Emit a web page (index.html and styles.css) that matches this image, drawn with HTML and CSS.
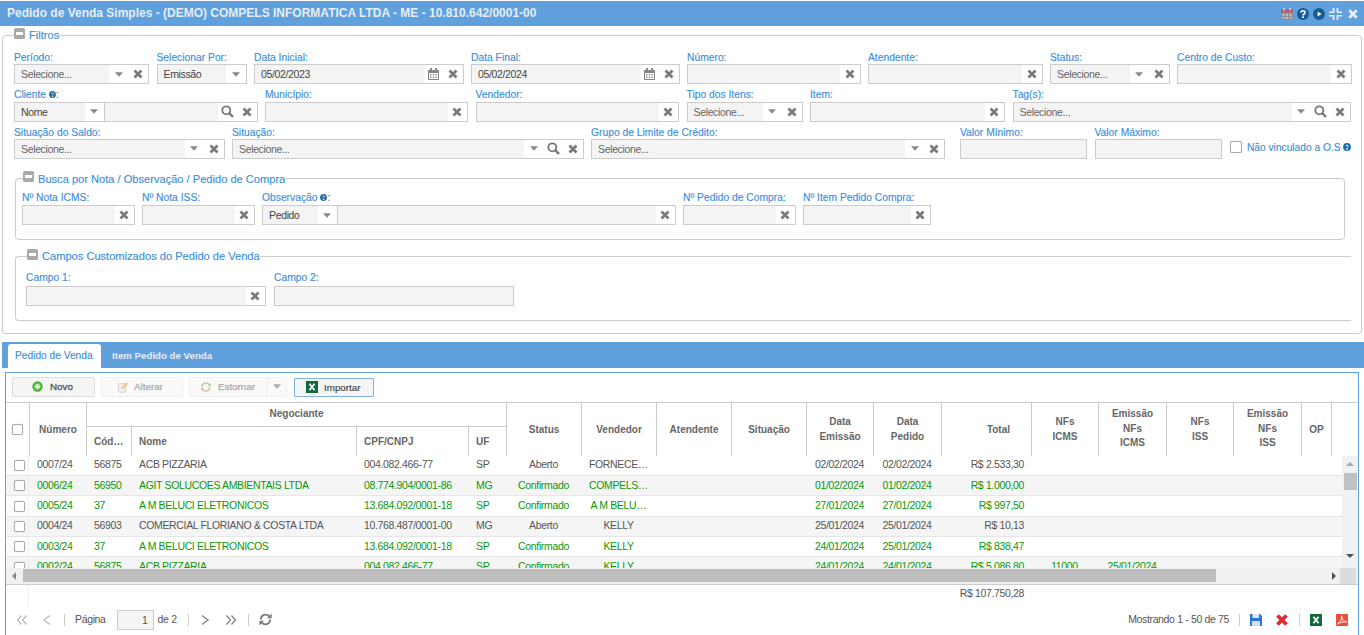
FILE: index.html
```html
<!DOCTYPE html>
<html lang="pt-BR">
<head>
<meta charset="utf-8">
<title>Pedido de Venda Simples</title>
<link rel="stylesheet" href="styles.css">
</head>
<body>
<svg class="defs" aria-hidden="true">
  <symbol id="x" viewBox="0 0 10 10"><path d="M1.5 1.5L8.5 8.5M8.5 1.5L1.5 8.5" fill="none" stroke="currentColor" stroke-width="2.8"/></symbol>
  <symbol id="caret" viewBox="0 0 8 5"><path d="M0 .3h8L4 4.8z" fill="currentColor"/></symbol>
  <symbol id="search" viewBox="0 0 13 13"><circle cx="5.3" cy="5.3" r="4" fill="none" stroke="currentColor" stroke-width="1.8"/><path d="M8.2 8.2L12 12" stroke="currentColor" stroke-width="2.4"/></symbol>
  <symbol id="cal" viewBox="0 0 11 12"><path d="M2 0h2v2h3V0h2v2h2v10H0V2h2zM1 5v6h9V5z" fill="currentColor"/><path d="M2 6h1.5v1.3H2zM4.7 6h1.5v1.3H4.7zM7.4 6h1.5v1.3H7.4zM2 8.4h1.5v1.3H2zM4.7 8.4h1.5v1.3H4.7zM7.4 8.4h1.5v1.3H7.4z" fill="currentColor"/></symbol>
  <symbol id="info" viewBox="0 0 8 8"><circle cx="4" cy="4" r="3.9" fill="#1f6aa5"/><path d="M2.9 3c0-1.4 2.3-1.4 2.3 0 0 .9-1.1.8-1.1 1.6M3.6 5.6h1v.8h-1z" fill="none" stroke="#fff" stroke-width=".8"/></symbol>
  <symbol id="minus" viewBox="0 0 11 11"><rect width="11" height="11" rx="1.5" fill="#a9a9a9"/><rect x="2" y="4" width="7" height="3" fill="#fff"/></symbol>
  <symbol id="xls" viewBox="0 0 12 12"><rect width="12" height="12" fill="#12693a"/><path d="M3.4 2.8L8.6 9.2M8.6 2.8L3.4 9.2" stroke="#fff" stroke-width="1.8"/></symbol>
</svg>

<header class="title">
  <h1>Pedido de Venda Simples - (DEMO) COMPELS INFORMATICA LTDA - ME - 10.810.642/0001-00</h1>
  <div class="title-icons">
    <svg class="ti" viewBox="0 0 12 12"><rect y="1" width="12" height="11" fill="#8d8d96"/><rect y="1" width="12" height="3.5" fill="#c0566a"/><path d="M3 0v2.5M9 0v2.5" stroke="#eee" stroke-width="1.2"/><path d="M1.5 6h2v1.5h-2zM5 6h2v1.5H5zM8.5 6h2v1.5h-2zM1.5 9h2v1.5h-2zM5 9h2v1.5H5zM8.5 9h2v1.5h-2z" fill="#d8d8d8"/></svg>
    <svg class="ti" viewBox="0 0 12 12"><circle cx="6" cy="6" r="6" fill="#145d96"/><path d="M3.9 4.6C4 2.2 8.2 2.2 8.1 4.6 8 6 6 6 6 7.4" fill="none" stroke="#fff" stroke-width="1.6"/><rect x="5.1" y="8.3" width="1.8" height="1.7" fill="#fff"/></svg>
    <svg class="ti" viewBox="0 0 12 12"><circle cx="6" cy="6" r="6" fill="#145d96"/><path d="M4.6 3.4L8.6 6l-4 2.6z" fill="#fff"/></svg>
    <svg class="ti ti-w" viewBox="0 0 13 12"><path d="M5.4 0v5H0V3.4h3.7V0zM7.6 0v5H13V3.4H9.3V0zM5.4 12V7H0v1.6h3.7V12zM7.6 12V7H13v1.6H9.3V12z" fill="#e8f0f8"/></svg>
    <svg class="ti ti-x" viewBox="0 0 10 10"><path d="M1.3 1.3L8.7 8.7M8.7 1.3L1.3 8.7" stroke="#e8f0f8" stroke-width="2.7"/></svg>
  </div>
</header>

<fieldset class="fs fs-main">
  <legend><svg class="minus"><use href="#minus"/></svg>Filtros</legend>
  <div class="frow r1">
    <div class="field"><label>Período:</label><div class="ctl"><span class="val mute">Selecione...</span><span class="b"><svg class="caret"><use href="#caret"/></svg></span><span class="b"><svg class="xi"><use href="#x"/></svg></span></div></div>
    <div class="field"><label>Selecionar Por:</label><div class="ctl"><span class="val">Emissão</span><span class="b"><svg class="caret"><use href="#caret"/></svg></span></div></div>
    <div class="field"><label>Data Inicial:</label><div class="ctl"><span class="val">05/02/2023</span><span class="b"><svg class="cal"><use href="#cal"/></svg></span><span class="b"><svg class="xi"><use href="#x"/></svg></span></div></div>
    <div class="field"><label>Data Final:</label><div class="ctl"><span class="val">05/02/2024</span><span class="b"><svg class="cal"><use href="#cal"/></svg></span><span class="b"><svg class="xi"><use href="#x"/></svg></span></div></div>
    <div class="field"><label>Número:</label><div class="ctl"><span class="val"></span><span class="b"><svg class="xi"><use href="#x"/></svg></span></div></div>
    <div class="field"><label>Atendente:</label><div class="ctl"><span class="val"></span><span class="b"><svg class="xi"><use href="#x"/></svg></span></div></div>
    <div class="field"><label>Status:</label><div class="ctl"><span class="val mute">Selecione...</span><span class="b"><svg class="caret"><use href="#caret"/></svg></span><span class="b"><svg class="xi"><use href="#x"/></svg></span></div></div>
    <div class="field"><label>Centro de Custo:</label><div class="ctl"><span class="val"></span><span class="b"><svg class="xi"><use href="#x"/></svg></span></div></div>
  </div>
  <div class="frow r2">
    <div class="field"><label>Cliente <svg class="info"><use href="#info"/></svg>:</label>
      <div class="pair pair-cli"><div class="ctl"><span class="val">Nome</span><span class="b"><svg class="caret"><use href="#caret"/></svg></span></div><div class="ctl"><span class="val"></span><span class="b"><svg class="se"><use href="#search"/></svg></span><span class="b"><svg class="xi"><use href="#x"/></svg></span></div></div></div>
    <div class="field"><label>Município:</label><div class="ctl"><span class="val"></span><span class="b"><svg class="xi"><use href="#x"/></svg></span></div></div>
    <div class="field"><label>Vendedor:</label><div class="ctl"><span class="val"></span><span class="b"><svg class="xi"><use href="#x"/></svg></span></div></div>
    <div class="field"><label>Tipo dos Itens:</label><div class="ctl"><span class="val mute">Selecione...</span><span class="b"><svg class="caret"><use href="#caret"/></svg></span><span class="b"><svg class="xi"><use href="#x"/></svg></span></div></div>
    <div class="field"><label>Item:</label><div class="ctl"><span class="val"></span><span class="b"><svg class="xi"><use href="#x"/></svg></span></div></div>
    <div class="field"><label>Tag(s):</label><div class="ctl"><span class="val mute">Selecione...</span><span class="b"><svg class="caret"><use href="#caret"/></svg></span><span class="b"><svg class="se"><use href="#search"/></svg></span><span class="b"><svg class="xi"><use href="#x"/></svg></span></div></div>
  </div>
  <div class="frow r3">
    <div class="field"><label>Situação do Saldo:</label><div class="ctl"><span class="val mute">Selecione...</span><span class="b"><svg class="caret"><use href="#caret"/></svg></span><span class="b"><svg class="xi"><use href="#x"/></svg></span></div></div>
    <div class="field"><label>Situação:</label><div class="ctl"><span class="val mute">Selecione...</span><span class="b"><svg class="caret"><use href="#caret"/></svg></span><span class="b"><svg class="se"><use href="#search"/></svg></span><span class="b"><svg class="xi"><use href="#x"/></svg></span></div></div>
    <div class="field"><label>Grupo de Limite de Crédito:</label><div class="ctl"><span class="val mute">Selecione...</span><span class="b"><svg class="caret"><use href="#caret"/></svg></span><span class="b"><svg class="xi"><use href="#x"/></svg></span></div></div>
    <div class="field"><label>Valor Mínimo:</label><div class="ctl"><span class="val"></span></div></div>
    <div class="field"><label>Valor Máximo:</label><div class="ctl"><span class="val"></span></div></div>
    <div class="chk"><span class="box box-lg"></span><span class="chk-t">Não vinculado a O.S</span><svg class="info"><use href="#info"/></svg></div>
  </div>

  <fieldset class="fs fs-busca">
    <legend><svg class="minus"><use href="#minus"/></svg>Busca por Nota / Observação / Pedido de Compra</legend>
    <div class="frow r4">
      <div class="field"><label>Nº Nota ICMS:</label><div class="ctl"><span class="val"></span><span class="b"><svg class="xi"><use href="#x"/></svg></span></div></div>
      <div class="field"><label>Nº Nota ISS:</label><div class="ctl"><span class="val"></span><span class="b"><svg class="xi"><use href="#x"/></svg></span></div></div>
      <div class="field"><label>Observação <svg class="info"><use href="#info"/></svg>:</label>
        <div class="pair pair-obs"><div class="ctl"><span class="val">Pedido</span><span class="b"><svg class="caret"><use href="#caret"/></svg></span></div><div class="ctl"><span class="val"></span><span class="b"><svg class="xi"><use href="#x"/></svg></span></div></div></div>
      <div class="field"><label>Nº Pedido de Compra:</label><div class="ctl"><span class="val"></span><span class="b"><svg class="xi"><use href="#x"/></svg></span></div></div>
      <div class="field"><label>Nº Item Pedido Compra:</label><div class="ctl"><span class="val"></span><span class="b"><svg class="xi"><use href="#x"/></svg></span></div></div>
    </div>
  </fieldset>

  <fieldset class="fs fs-campos">
    <legend><svg class="minus"><use href="#minus"/></svg>Campos Customizados do Pedido de Venda</legend>
    <div class="frow r5">
      <div class="field"><label>Campo 1:</label><div class="ctl"><span class="val"></span><span class="b"><svg class="xi"><use href="#x"/></svg></span></div></div>
      <div class="field"><label>Campo 2:</label><div class="ctl"><span class="val"></span></div></div>
    </div>
  </fieldset>
</fieldset>

<nav class="tabs">
  <a class="tab tab-on">Pedido de Venda</a>
  <a class="tab">Item Pedido de Venda</a>
</nav>

<section class="panel">
  <div class="toolbar">
    <button class="btn btn-novo"><svg class="bi" viewBox="0 0 12 12"><circle cx="6" cy="6" r="5.6" fill="#4cae32"/><circle cx="6" cy="6" r="3.6" fill="#7fd15f"/><path d="M6 3.2v5.6M3.2 6h5.6" stroke="#fff" stroke-width="1.7"/></svg>Novo</button>
    <button class="btn btn-off btn-alt"><svg class="bi" viewBox="0 0 12 12"><path d="M.8 2.5h7.5v9H.8z" fill="#f4f4f4" stroke="#ccc"/><path d="M3.5 8.5l.5-2.2L9.6.7l1.7 1.7L5.7 8z" fill="#efc983"/></svg>Alterar</button>
    <div class="split">
      <button class="btn btn-off btn-est"><svg class="bi" viewBox="0 0 14 12"><path d="M2.2 6.2A4.8 4.8 0 0 1 11 3.5" fill="none" stroke="#9ed593" stroke-width="1.4"/><path d="M12.6 1.2v3.6H9z" fill="#9ed593"/><path d="M11.8 5.8A4.8 4.8 0 0 1 3 8.5" fill="none" stroke="#f2aaa0" stroke-width="1.4"/><path d="M1.4 10.8V7.2H5z" fill="#f2aaa0"/></svg>Estornar</button>
      <button class="btn btn-off btn-car"><svg class="caret"><use href="#caret"/></svg></button>
    </div>
    <button class="btn btn-imp"><svg class="bi"><use href="#xls"/></svg>Importar</button>
  </div>

  <table class="grid ghead">
    <colgroup><col class="c1"><col class="c2"><col class="c3"><col class="c4"><col class="c5"><col class="c6"><col class="c7"><col class="c7"><col class="c7"><col class="c7"><col class="c8"><col class="c9"><col class="c10"><col class="c8"><col class="c9"><col class="c8"><col class="c9"><col class="c11"><col class="c12"></colgroup>
    <thead>
      <tr class="h1">
        <th rowspan="2" class="nb"><span class="box"></span></th>
        <th rowspan="2">Número</th>
        <th colspan="4" class="neg">Negociante</th>
        <th rowspan="2">Status</th>
        <th rowspan="2">Vendedor</th>
        <th rowspan="2">Atendente</th>
        <th rowspan="2">Situação</th>
        <th rowspan="2">Data<br>Emissão</th>
        <th rowspan="2">Data<br>Pedido</th>
        <th rowspan="2" class="tot">Total</th>
        <th rowspan="2">NFs<br>ICMS</th>
        <th rowspan="2" class="l3">Emissão<br>NFs<br>ICMS</th>
        <th rowspan="2">NFs<br>ISS</th>
        <th rowspan="2" class="l3">Emissão<br>NFs<br>ISS</th>
        <th rowspan="2">OP</th>
        <th rowspan="2"></th>
      </tr>
      <tr class="h2">
        <th class="lf">Cód…</th>
        <th class="lf">Nome</th>
        <th class="lf">CPF/CNPJ</th>
        <th class="lf">UF</th>
      </tr>
    </thead>
  </table>

  <div class="gbody">
    <div class="rows">
      <table class="grid">
        <colgroup><col class="c1"><col class="c2"><col class="c3"><col class="c4"><col class="c5"><col class="c6"><col class="c7"><col class="c7"><col class="c7"><col class="c7"><col class="c8"><col class="c9"><col class="c10"><col class="c8"><col class="c9"><col class="c8"><col class="c9"><col class="c11"><col class="c13"></colgroup>
        <tbody>
          <tr><td class="ck"><span class="box"></span></td><td>0007/24</td><td>56875</td><td>ACB PIZZARIA</td><td>004.082.466-77</td><td>SP</td><td class="ce">Aberto</td><td class="ce">FORNECE…</td><td></td><td></td><td class="ce">02/02/2024</td><td class="ce">02/02/2024</td><td class="ri">R$ 2.533,30</td><td></td><td></td><td></td><td></td><td></td><td></td></tr>
          <tr class="alt ok"><td class="ck"><span class="box"></span></td><td>0006/24</td><td>56950</td><td>AGIT SOLUCOES AMBIENTAIS LTDA</td><td>08.774.904/0001-86</td><td>MG</td><td class="ce">Confirmado</td><td class="ce">COMPELS…</td><td></td><td></td><td class="ce">01/02/2024</td><td class="ce">01/02/2024</td><td class="ri">R$ 1.000,00</td><td></td><td></td><td></td><td></td><td></td><td></td></tr>
          <tr class="ok"><td class="ck"><span class="box"></span></td><td>0005/24</td><td>37</td><td>A M BELUCI ELETRONICOS</td><td>13.684.092/0001-18</td><td>SP</td><td class="ce">Confirmado</td><td class="ce">A M BELU…</td><td></td><td></td><td class="ce">27/01/2024</td><td class="ce">27/01/2024</td><td class="ri">R$ 997,50</td><td></td><td></td><td></td><td></td><td></td><td></td></tr>
          <tr class="alt"><td class="ck"><span class="box"></span></td><td>0004/24</td><td>56903</td><td>COMERCIAL FLORIANO &amp; COSTA LTDA</td><td>10.768.487/0001-00</td><td>MG</td><td class="ce">Aberto</td><td class="ce">KELLY</td><td></td><td></td><td class="ce">25/01/2024</td><td class="ce">25/01/2024</td><td class="ri">R$ 10,13</td><td></td><td></td><td></td><td></td><td></td><td></td></tr>
          <tr class="ok"><td class="ck"><span class="box"></span></td><td>0003/24</td><td>37</td><td>A M BELUCI ELETRONICOS</td><td>13.684.092/0001-18</td><td>SP</td><td class="ce">Confirmado</td><td class="ce">KELLY</td><td></td><td></td><td class="ce">24/01/2024</td><td class="ce">25/01/2024</td><td class="ri">R$ 838,47</td><td></td><td></td><td></td><td></td><td></td><td></td></tr>
          <tr class="alt ok"><td class="ck"><span class="box"></span></td><td>0002/24</td><td>56875</td><td>ACB PIZZARIA</td><td>004.082.466-77</td><td>SP</td><td class="ce">Confirmado</td><td class="ce">KELLY</td><td></td><td></td><td class="ce">24/01/2024</td><td class="ce">24/01/2024</td><td class="ri">R$ 5.086,80</td><td class="ce">11000</td><td class="ce">25/01/2024</td><td></td><td></td><td></td><td></td></tr>
        </tbody>
      </table>
    </div>
    <div class="vbar"><span class="au"></span><span class="vthumb"></span><span class="ad"></span></div>
  </div>
  <div class="hbar"><span class="al"></span><span class="hthumb"></span><span class="ar"></span><span class="corner"></span></div>

  <div class="summary"><span class="sum-chk"></span><span class="sum-val">R$ 107.750,28</span></div>

  <div class="pager">
    <svg class="pg pg-dim" viewBox="0 0 12 12"><path d="M5.5 1.5L1.5 6l4 4.5M10.5 1.5L6.5 6l4 4.5" fill="none" stroke="currentColor" stroke-width="1.4"/></svg>
    <svg class="pg pg-dim" viewBox="0 0 12 12"><path d="M9 1.5L3 6l6 4.5" fill="none" stroke="currentColor" stroke-width="1.4"/></svg>
    <span class="sep sep-l"></span>
    <span class="pg-t">Página</span>
    <span class="pg-in">1</span>
    <span class="pg-de">de 2</span>
    <span class="sep"></span>
    <svg class="pg" viewBox="0 0 12 12"><path d="M3 1.5L9 6l-6 4.5" fill="none" stroke="currentColor" stroke-width="1.4"/></svg>
    <svg class="pg" viewBox="0 0 12 12"><path d="M1.5 1.5L5.5 6l-4 4.5M6.5 1.5L10.5 6l-4 4.5" fill="none" stroke="currentColor" stroke-width="1.4"/></svg>
    <span class="sep sep-r"></span>
    <svg class="refresh" viewBox="0 0 13 13"><path d="M1.8 6.5A4.8 4.8 0 0 1 10.3 3.4" fill="none" stroke="#7c7c7c" stroke-width="1.8"/><path d="M12.6 .6v4.7H8z" fill="#7c7c7c"/><path d="M11.2 6.5A4.8 4.8 0 0 1 2.7 9.6" fill="none" stroke="#7c7c7c" stroke-width="1.8"/><path d="M.4 12.4V7.7H5z" fill="#7c7c7c"/></svg>
    <div class="pg-right">
      <span class="pg-show">Mostrando 1 - 50 de 75</span>
      <span class="sep"></span>
      <svg class="act" viewBox="0 0 12 12"><path d="M0 0h10l2 2v10H0z" fill="#2f78d0"/><rect x="2.5" y="0" width="6.5" height="4" fill="#dfe8f2"/><rect x="2" y="7" width="8" height="5" fill="#cfe0f4"/></svg>
      <svg class="act act-x" viewBox="0 0 12 12"><path d="M1.5 1.5L10.5 10.5M10.5 1.5L1.5 10.5" stroke="#e2292b" stroke-width="3.8"/></svg>
      <span class="sep"></span>
      <svg class="act"><use href="#xls"/></svg>
      <svg class="act act-last" viewBox="0 0 12 12"><rect width="12" height="12" fill="#ea4f3d"/><path d="M1.5 10C4 8.5 6 5 5.7 1.8 5.5 5 8 7.8 10.7 8 7.5 7.6 4 8.2 1.5 10z" fill="none" stroke="#fff" stroke-width=".9"/></svg>
    </div>
  </div>
</section>
</body>
</html>
```

FILE: styles.css
```css
* { box-sizing: border-box; }
html, body { height: 635px; overflow: hidden; }
body { margin: 0; background: #fff; font: 10.5px/13px "Liberation Sans", Arial, sans-serif; letter-spacing: -.35px; color: #555; }
.defs { display: none; }

.title { display: flex; align-items: center; height: 25px; margin-top: 1px; padding: 0 6px 0 7px; background: #5fa0dd; }
.title h1 { flex: 1; margin: 0; font-size: 12px; font-weight: bold; letter-spacing: 0; color: #e6edf4; }
.title-icons { display: flex; align-items: center; gap: 4px; }
.ti { display: block; width: 12px; height: 12px; }
.ti-w { width: 13px; margin: 0 1px 0 0; }
.ti-x { width: 10px; height: 10px; margin-left: 1px; }

.fs { margin: 0; min-width: 0; border: 1px solid #ccc; border-radius: 4px; box-shadow: 0 0 1px #ddd; }
.fs legend { display: flex; align-items: center; height: 14px; padding: 0; margin-left: 1px; font-size: 11.1px; line-height: 14px; letter-spacing: 0; color: #3d8fd9; -webkit-text-stroke: .15px #3d8fd9; }
.minus { width: 11px; height: 11px; margin-right: 4px; margin-top: -4px; }
.fs-main { margin: 2px 2px 0; padding: 9px 11px 12px; width: 1360px; }
.fs-main > legend { margin-left: 0; }
.fs-busca { width: 1330px; margin: 13px 0 0 1px; padding: 5px 6px 14px; }
.fs-campos { width: 1336px; margin: 9px 0 0 1px; padding: 8px 10px 14px; border-right: 0; border-radius: 4px 0 0 4px; }

.frow { display: grid; column-gap: 7.5px; }
.r1 { grid-template-columns: 135px 90px 209.5px 208.5px 173.5px 174.5px 119.5px 174.5px; }
.r2 { grid-template-columns: 243.5px 203px 203.5px 116px 195px 338.5px; margin-top: 3.5px; }
.r2 label { margin-bottom: 1px; }
.r3 { grid-template-columns: 210.5px 351.5px 354px 134.5px 127px 130px; margin-top: 4px; }
.r3 > .field:nth-child(4) { padding-left: 7.5px; }
.r4 { grid-template-columns: 113px 113px 414px 113px 128px; column-gap: 7px; }
.r5 { grid-template-columns: 240px 240px; column-gap: 8px; }
.r4 label, .r5 label { margin-bottom: 1.5px; }

label { display: block; height: 13px; font-size: 10.3px; line-height: 13px; letter-spacing: 0; color: #3d8fd9; white-space: nowrap; -webkit-text-stroke: .15px #3d8fd9; }
.info { display: inline-block; width: 7px; height: 7px; vertical-align: 0; }

.ctl { display: flex; height: 20px; border: 1px solid #ccc; background: #fff; }
.val { flex: 1; min-width: 0; padding-left: 6px; background: #f4f4f4; line-height: 19px; color: #444; white-space: nowrap; }
.val.mute { color: #666; }
.b { display: flex; flex: 0 0 19.5px; align-items: center; justify-content: center; }
.xi { width: 10px; height: 10px; color: #7a7a7a; }
.caret { width: 8px; height: 5px; color: #888; }
.se { width: 13px; height: 13px; color: #777; }
.cal { width: 11px; height: 12px; color: #888; }

.pair { display: flex; }
.pair-cli .ctl:first-child { flex: 0 0 90px; }
.pair-cli .ctl:last-child { flex: 1; }
.pair-obs .ctl:first-child { flex: 0 0 75px; }
.pair-obs .ctl:last-child { flex: 1; }
.pair .ctl:first-child { border-right: 0; }

.chk { display: flex; align-items: center; align-self: end; gap: 5px; height: 20px; margin-left: 1px; padding-bottom: 3px; white-space: nowrap; }
.chk-t { margin-right: -2px; color: #3d8fd9; font-size: 10.2px; letter-spacing: 0; -webkit-text-stroke: .15px #3d8fd9; }
.chk .info { width: 8px; height: 8px; }
.box { display: inline-block; width: 11px; height: 11px; border: 1px solid #aaa; border-radius: 2px; background: #fff; vertical-align: middle; box-shadow: 0 0 1px #bbb; }
.box-lg { width: 12px; height: 12px; }

.tabs { display: flex; align-items: flex-end; width: 1362px; height: 26px; margin: 8px 0 0 2px; padding-left: 6px; background: #5fa0dd; }
.tab { height: 24px; margin-left: 11px; font-size: 9.7px; line-height: 24px; letter-spacing: 0; color: #e6edf4; font-weight: bold; }
.tab-on { width: 93px; margin-left: 0; padding-left: 7px; background: #fff; border-radius: 3px 3px 0 0; color: #3d8fd9; font-size: 10.2px; font-weight: normal; white-space: nowrap; -webkit-text-stroke: .15px #3d8fd9; }

.panel { width: 1354px; height: 263px; margin: 4px 0 0 5px; border: 1px solid #5fa0dd; border-bottom: 0; }
.toolbar { display: flex; align-items: flex-start; gap: 6px; height: 29px; padding: 4px 0 0 6px; }
.btn { display: flex; align-items: center; height: 20px; padding: 0; border: 1px solid #ddd; border-radius: 2px; background: #f5f5f5; font: 9.8px "Liberation Sans", Arial, sans-serif; letter-spacing: 0; color: #555; }
.bi { width: 12px; height: 12px; flex: none; }
.btn-novo { width: 83px; padding-left: 19px; gap: 7px; -webkit-text-stroke: .3px #555; }
.btn-novo .bi { width: 11px; height: 11px; }
.btn-off { background: #fafafa; border-color: #eee; color: #aaa; }
.btn-alt { width: 82px; padding-left: 16px; gap: 5px; -webkit-text-stroke: .25px #aaa; }
.btn-alt .bi { width: 11px; }
.split { display: flex; margin-right: 1px; }
.btn-est { width: 78px; padding-left: 10px; gap: 6px; border-radius: 2px 0 0 2px; -webkit-text-stroke: .25px #aaa; }
.btn-car { width: 20px; justify-content: center; border-left: 0; }
.btn-car .caret { color: #aaa; }
.btn-imp { width: 80px; height: 19px; margin-top: 1px; padding-left: 11px; gap: 6px; border-color: #7fb2e3; border-radius: 1px; color: #444; -webkit-text-stroke: .15px #444; }

.grid { width: 100%; border-collapse: separate; border-spacing: 0; table-layout: fixed; }
.c1 { width: 23px; } .c2 { width: 57px; } .c3 { width: 45px; } .c4 { width: 225px; } .c5 { width: 112px; }
.c6 { width: 38px; } .c7 { width: 75px; } .c8 { width: 67px; } .c9 { width: 68px; } .c10 { width: 90px; }
.c11 { width: 30px; } .c12 { width: 27px; } .c13 { width: 11px; }

.ghead { border-top: 1px solid #ccc; }
.ghead th { padding: 0; border-left: 1px solid #ccc; font-size: 10px; line-height: 15px; letter-spacing: 0; color: #666; font-weight: bold; text-align: center; vertical-align: middle; }
.ghead th.nb { border-left: 0; }
.ghead .h1 { height: 24px; }
.ghead .h2 { height: 29px; }
.ghead th.neg { padding-bottom: 2px; border-bottom: 1px solid #ccc; }
.ghead th.lf { padding-left: 7px; text-align: left; }
.ghead .h2 th:first-child { border-left: 1px solid #ccc; }
.ghead th.tot { padding-right: 21px; text-align: right; }
.ghead th.l3 { line-height: 14.5px; }

.gbody { display: flex; height: 112px; }
.rows { flex: 0 0 1336px; height: 112px; overflow: hidden; }
.rows td { height: 20.4px; padding: 0 7px 1px 8px; border-bottom: 1px solid #e6e6e6; color: #555; white-space: nowrap; overflow: hidden; }
.rows tr.alt td { background: #f5f5f5; }
.rows tr.ok td { color: #0a980a; }
.rows td.ck { padding: 0 0 1px 8px; border-right: 1px solid #eee; }
.rows td.ce { padding: 0 0 1px; text-align: center; }
.rows td.ri { padding: 0 7px 1px 0; text-align: right; }

.vbar { display: flex; flex: 0 0 16px; flex-direction: column; align-items: center; background: #f1f1f1; }
.au { width: 0; height: 0; margin-top: 6px; border: 4px solid transparent; border-top: 0; border-bottom: 4px solid #aaa; }
.vthumb { width: 13px; height: 17px; margin-top: 7px; background: #c1c1c1; }
.ad { width: 0; height: 0; margin-top: 64px; border: 4px solid transparent; border-bottom: 0; border-top: 4px solid #505050; }

.hbar { display: flex; align-items: center; height: 17px; background: #f1f1f1; border-bottom: 1px solid #ccc; }
.al { width: 0; height: 0; margin-left: 6px; border: 4px solid transparent; border-left: 0; border-right: 4px solid #888; }
.hthumb { width: 1193px; height: 13px; margin-left: 7px; background: #bdbdbd; }
.ar { width: 0; height: 0; margin-left: 116px; border: 4px solid transparent; border-right: 0; border-left: 4px solid #505050; }
.corner { flex: 0 0 16px; align-self: stretch; margin-left: 4px; background: #dcdcdc; }

.summary { display: flex; height: 20px; line-height: 17px; color: #555; }
.sum-chk { flex: 0 0 23px; border-right: 1px solid #eee; }
.sum-val { flex: 0 0 995px; text-align: right; }

.pager { display: flex; align-items: center; height: 30px; padding-left: 10px; color: #555; }
.pg { width: 12px; height: 12px; margin-right: 14.5px; color: #888; }
.pg-dim { margin-right: 14px; color: #bbb; }
.pg-dim:first-child { margin-right: 13px; margin-left: 0; }
.sep { width: 1px; height: 12px; margin-right: 10px; background: #ccc; }
.sep-l { margin-left: -3px; }
.sep-r { margin-left: -4px; }
.pg-t { margin-right: 11px; }
.pg-in { width: 37px; height: 20px; padding-right: 5px; border: 1px solid #ccc; background: #f4f4f4; line-height: 19px; text-align: right; }
.pg-de { margin: 0 11px 0 4px; }
.refresh { width: 13px; height: 13px; }
.pg-right { display: flex; align-items: center; margin-left: auto; padding-right: 10px; }
.pg-show { margin-right: 10px; }
.act { width: 12px; height: 12px; margin-right: 14px; }
.act-x { margin-right: 11px; }
.act-last { margin-right: 0; }
```
